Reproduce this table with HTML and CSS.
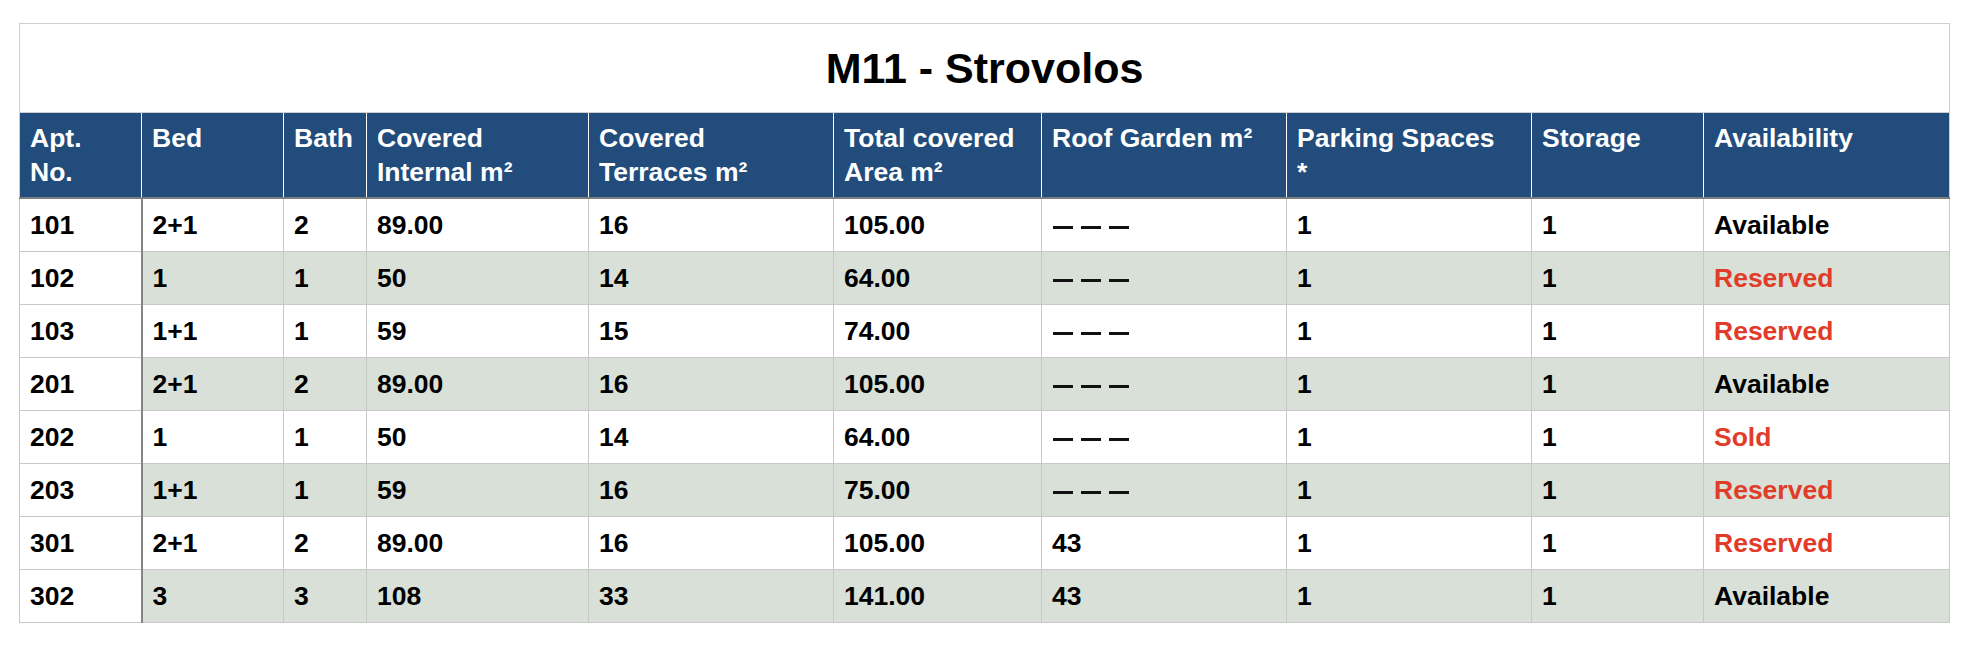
FILE: index.html
```html
<!DOCTYPE html>
<html lang="en">
<head>
<meta charset="utf-8">
<title>M11 - Strovolos</title>
<link rel="stylesheet" href="styles.css">
</head>
<body>
<table class="units">
  <colgroup>
    <col class="c-apt"><col class="c-bed"><col class="c-bath"><col class="c-int"><col class="c-ter">
    <col class="c-tot"><col class="c-roof"><col class="c-park"><col class="c-stor"><col class="c-avail">
  </colgroup>
  <thead>
    <tr><th colspan="10" class="title">M11 - Strovolos</th></tr>
    <tr class="head">
      <th>Apt.<br>No.</th>
      <th>Bed</th>
      <th>Bath</th>
      <th>Covered<br>Internal m²</th>
      <th>Covered<br>Terraces m²</th>
      <th>Total covered<br>Area m²</th>
      <th>Roof Garden m²</th>
      <th>Parking Spaces<br>*</th>
      <th>Storage</th>
      <th>Availability</th>
    </tr>
  </thead>
  <tbody>
    <tr><td>101</td><td>2+1</td><td>2</td><td>89.00</td><td>16</td><td>105.00</td><td><span class="dash" aria-label="———"><i></i><i></i><i></i></span></td><td>1</td><td>1</td><td>Available</td></tr>
    <tr><td>102</td><td>1</td><td>1</td><td>50</td><td>14</td><td>64.00</td><td><span class="dash" aria-label="———"><i></i><i></i><i></i></span></td><td>1</td><td>1</td><td class="red">Reserved</td></tr>
    <tr><td>103</td><td>1+1</td><td>1</td><td>59</td><td>15</td><td>74.00</td><td><span class="dash" aria-label="———"><i></i><i></i><i></i></span></td><td>1</td><td>1</td><td class="red">Reserved</td></tr>
    <tr><td>201</td><td>2+1</td><td>2</td><td>89.00</td><td>16</td><td>105.00</td><td><span class="dash" aria-label="———"><i></i><i></i><i></i></span></td><td>1</td><td>1</td><td>Available</td></tr>
    <tr><td>202</td><td>1</td><td>1</td><td>50</td><td>14</td><td>64.00</td><td><span class="dash" aria-label="———"><i></i><i></i><i></i></span></td><td>1</td><td>1</td><td class="red">Sold</td></tr>
    <tr><td>203</td><td>1+1</td><td>1</td><td>59</td><td>16</td><td>75.00</td><td><span class="dash" aria-label="———"><i></i><i></i><i></i></span></td><td>1</td><td>1</td><td class="red">Reserved</td></tr>
    <tr><td>301</td><td>2+1</td><td>2</td><td>89.00</td><td>16</td><td>105.00</td><td>43</td><td>1</td><td>1</td><td class="red">Reserved</td></tr>
    <tr><td>302</td><td>3</td><td>3</td><td>108</td><td>33</td><td>141.00</td><td>43</td><td>1</td><td>1</td><td>Available</td></tr>
  </tbody>
</table>
</body>
</html>
```
FILE: styles.css
```css
html, body {
  margin: 0;
  padding: 0;
  background: #ffffff;
}

body {
  padding: 23px 0 0 19px;
  font-family: "Liberation Sans", Arial, Helvetica, sans-serif;
  font-weight: bold;
  color: #000;
}

.units {
  border-collapse: collapse;
  table-layout: fixed;
  width: 1930px;
  border: 1px solid #cfcfcf;
  font-size: 26.5px;
  line-height: 34px;
}

.c-apt { width: 122px; }
.c-bed { width: 142px; }
.c-bath { width: 83px; }
.c-int { width: 222px; }
.c-ter { width: 245px; }
.c-tot { width: 208px; }
.c-roof { width: 245px; }
.c-park { width: 245px; }
.c-stor { width: 172px; }
.c-avail { width: 246px; }

.title {
  height: 88px;
  padding: 0;
  text-align: center;
  vertical-align: middle;
  font-size: 43px;
  line-height: 50px;
  color: #000;
  background: #fff;
  border: 1px solid #cfcfcf;
}

.head th {
  background: #214c7c;
  color: #fff;
  text-align: left;
  vertical-align: top;
  padding: 8px 10px 8px 10px;
  height: 68px;
  border-left: 1px solid #ffffff;
  border-right: 1px solid #ffffff;
  border-top: 1px solid #cfcfcf;
  border-bottom: 2px solid #7d7d7d;
  white-space: nowrap;
}

.head th:first-child { border-left-color: #cfcfcf; }
.head th:last-child { border-right-color: #cfcfcf; }

tbody td {
  height: 52px;
  padding: 0 10px;
  vertical-align: middle;
  border: 1px solid #c8c8c8;
  white-space: nowrap;
}

tbody tr:nth-child(even) td {
  background: #d8e0d7;
}

tbody tr td:first-child {
  background: #ffffff;
  border-right: 2px solid #858585;
}

tbody tr:nth-child(even) td:first-child {
  background: #ffffff;
}

.red {
  color: #e03c29;
}

.dash {
  display: inline-flex;
  gap: 8px;
  align-items: center;
  margin-left: 1px;
  vertical-align: 5px;
}

.dash i {
  display: block;
  width: 20px;
  height: 3px;
  background: #111;
}
```
